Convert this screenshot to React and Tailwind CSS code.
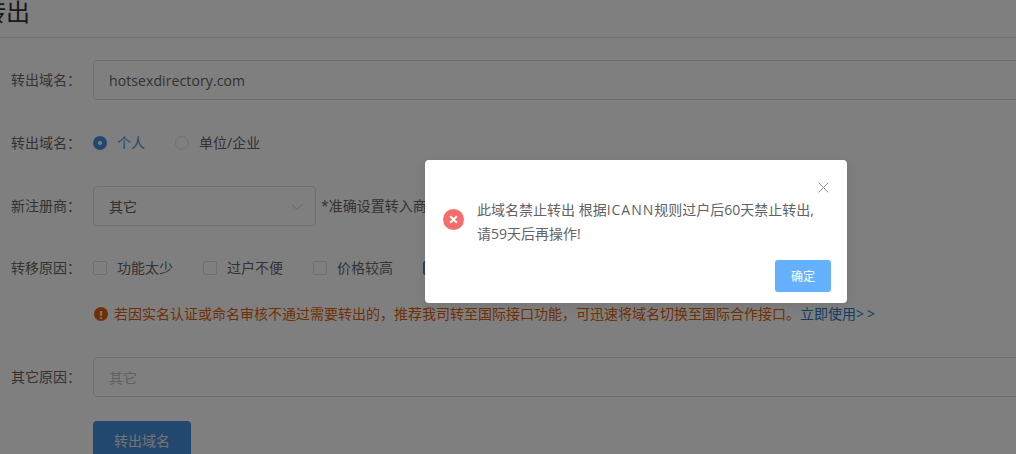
const Label = ({ children }) => <div className="w-[93px] shrink-0 pl-[11px] text-[14px] text-[#666666]">{children}</div>;
const Check = ({ children, checked }) => (
  <div className="flex w-[110px] shrink-0 items-center gap-[10px] text-[14px] text-[#666666]">
    <span className={`block size-[14px] rounded-[2px] border ${checked ? "border-[#4590e0] bg-[#4590e0]" : "border-[#dcdfe6] bg-white"}`} />
    <span>{children}</span>
  </div>
);
export default function App() {
  return (
    <div className="relative h-[454px] w-[1016px] overflow-hidden bg-white font-['Open_Sans','Noto_Sans_CJK_SC',sans-serif] text-[14px] leading-[20px]">
      <div className="flex h-[38px] items-start border-b border-[#e6e6e6]">
        <h1 className="ml-[-18px] mt-[-6px] text-[24px] leading-[36px] font-normal whitespace-nowrap text-[#333333]">转出</h1>
      </div>
      <div className="mt-[22px] flex h-[40px] items-center">
        <Label>转出域名：</Label>
        <div className="flex h-[40px] w-[1000px] shrink-0 items-center rounded-[4px] border border-[#dcdfe6] px-[15px] pt-[1px] tracking-[0.1px] text-[#606266]">hotsexdirectory.com</div>
      </div>
      <div className="mt-[33px] flex h-[20px] items-center">
        <Label>转出域名：</Label>
        <div className="flex items-center">
          <span className="flex size-[14px] items-center justify-center rounded-full bg-[#4590e0]"><span className="size-[4px] rounded-full bg-white" /></span>
          <span className="ml-[10px] w-[30px] text-[#4590e0]">个人</span>
          <span className="ml-[28px] size-[14px] rounded-full border border-[#dcdfe6]" />
          <span className="ml-[10px] text-[#666666]">单位/企业</span>
        </div>
      </div>
      <div className="mt-[33px] flex h-[40px] items-center">
        <Label>新注册商：</Label>
        <div className="flex h-[40px] w-[223px] shrink-0 items-center justify-between rounded-[4px] border border-[#dcdfe6] pl-[15px] pr-[12px] pt-[1px] text-[#606266]">
          <span>其它</span>
          <svg width="12" height="8" viewBox="0 0 12 8" fill="none" stroke="#c0c4cc" strokeWidth="1"><path d="M1 1.5 6 6.5 11 1.5" /></svg>
        </div>
        <span className="ml-[5px] whitespace-nowrap text-[14px] text-[#666666]">*准确设置转入商可以提高转出的成功率，请您务必选择正确的转入商再进行操作。</span>
      </div>
      <div className="mt-[32px] flex h-[20px] items-center">
        <Label>转移原因：</Label>
        <Check>功能太少</Check>
        <Check>过户不便</Check>
        <Check>价格较高</Check>
        <Check checked>其它</Check>
      </div>
      <div className="ml-[93px] mt-[26px] flex h-[20px] items-center whitespace-nowrap text-[14px] text-[#e0600a]">
        <span className="ml-[1px] mr-[6px] flex size-[14px] items-center justify-center rounded-full bg-[#e0600a] text-[11px] font-bold leading-none text-white">!</span>
        <span>若因实名认证或命名审核不通过需要转出的，推荐我司转至国际接口功能，可迅速将域名切换至国际合作接口。</span>
        <span className="text-[#2a7ac8]">立即使用<span className="tracking-[3px]">&gt;&gt;</span></span>
      </div>
      <div className="mt-[33px] flex h-[40px] items-center">
        <Label>其它原因：</Label>
        <div className="flex h-[40px] w-[1000px] shrink-0 items-center rounded-[4px] border border-[#dcdfe6] px-[15px] pt-[1px] text-[#c0c4cc]">其它</div>
      </div>
      <div className="ml-[93px] mt-[24px] flex h-[40px] w-[98px] items-center justify-center rounded-[4px] bg-[#4590e0] text-[#e8e8e8]">转出域名</div>

      <div className="absolute inset-0 bg-black/50" />

      <div className="absolute left-[425px] top-[160px] h-[143px] w-[422px] rounded-[4px] bg-white pl-[18px] pr-[16px] pt-[38px] shadow-[0_2px_12px_rgba(0,0,0,0.1)]">
        <button className="absolute right-[18px] top-[22px] text-[#909399]">
          <svg width="11" height="11" viewBox="0 0 11 11" fill="none" stroke="currentColor" strokeWidth="1" className="block"><path d="M.6.6 10.4 10.4M10.4.6.6 10.4" /></svg>
        </button>
        <div className="flex items-center">
          <span className="relative top-[-3px] flex size-[21px] shrink-0 items-center justify-center rounded-full bg-[#f56c6c]">
            <svg width="9" height="9" viewBox="0 0 9 9" stroke="white" strokeWidth="2" fill="none"><path d="M1.2 1.2 7.8 7.8M7.8 1.2 1.2 7.8" /></svg>
          </span>
          <p className="ml-[13px] w-[350px] text-[14px] leading-[24px] text-[#606266]">此域名禁止转出 根据<span className="tracking-[1px]">ICANN</span>规则过户后60天禁止转出,<br />请59天后再操作!</p>
        </div>
        <div className="mt-[14px] flex justify-end">
          <button className="h-[32px] w-[56px] rounded-[3px] bg-[#66b1ff] pt-[1px] text-[12px] text-white">确定</button>
        </div>
      </div>
    </div>
  );
}
